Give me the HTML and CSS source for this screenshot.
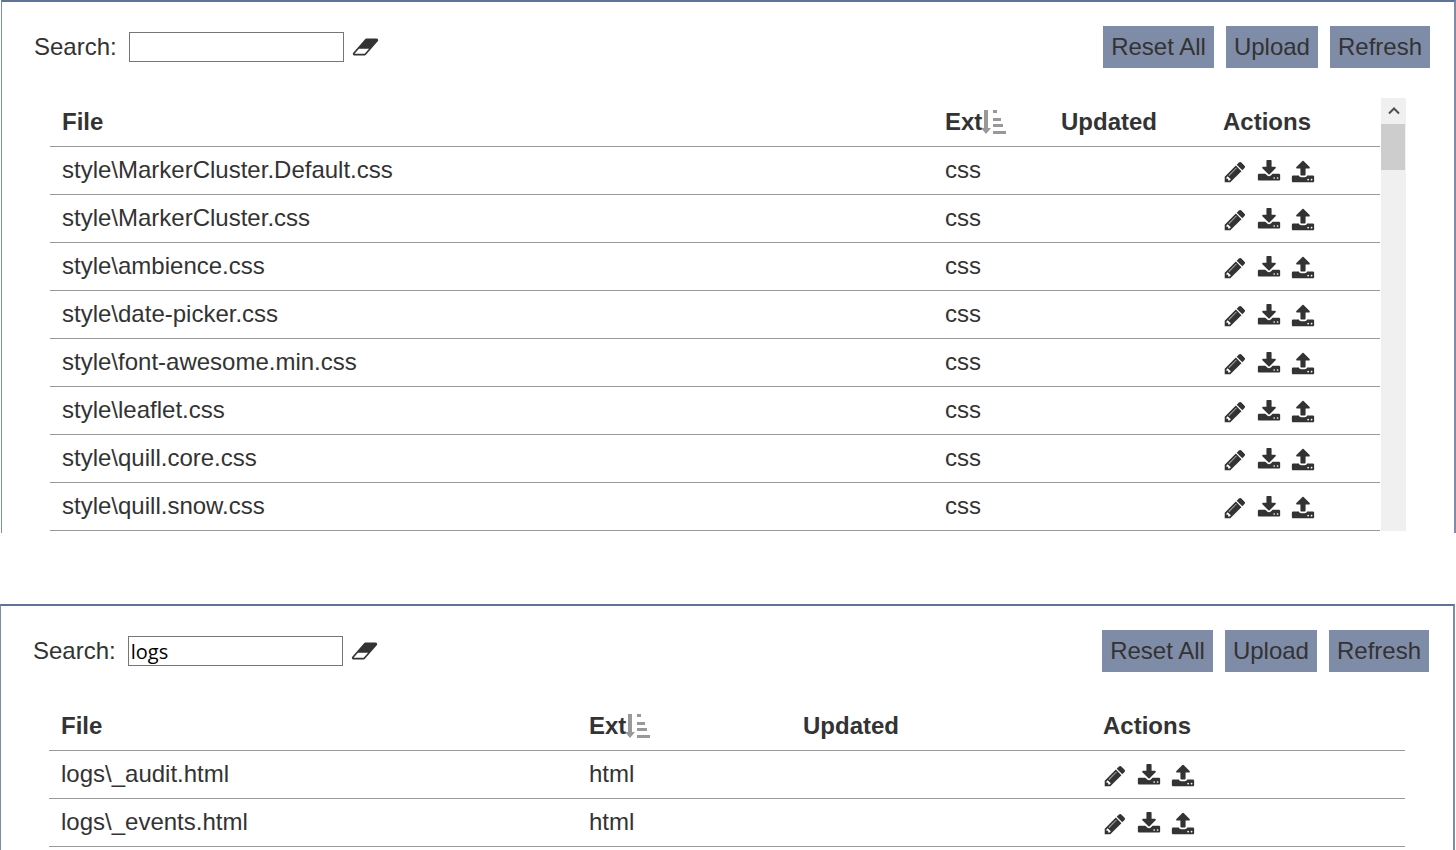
FILE: index.html
```html
<!DOCTYPE html>
<html lang="en">
<head>
  <meta charset="UTF-8" />
  <meta name="viewport" content="width=device-width, initial-scale=1.0" />
  <title>Files</title>
  <link rel="stylesheet" href="styles.css">
</head>
<body>
  <svg class="icon-defs" width="0" height="0">
    <symbol id="i-eraser" viewBox="0 0 2048 1792">
      <path d="M960 1408l336-384h-768l-336 384h768zm1013-1077q15 34 9.5 71.5t-30.5 65.5l-896 1024q-38 44-96 44h-768q-38 0-69.5-20.5t-47.5-54.5q-15-34-9.5-71.5t30.5-65.5l896-1024q38-44 96-44h768q38 0 70 20.5t47 54.5z"/>
    </symbol>
    <symbol id="i-pencil" viewBox="0 0 1792 1792">
      <path d="M491 1536l91-91-235-235-91 91v107h128v128h107zm523-928q0-22-22-22-10 0-17 7l-542 542q-7 7-7 17 0 22 22 22 10 0 17-7l542-542q7-7 7-17zm-54-192l416 416-832 832h-416v-416zm683 96q0 53-37 90l-166 166-416-416 166-165q36-38 90-38 53 0 91 38l235 234q37 39 37 91z"/>
    </symbol>
    <symbol id="i-download" viewBox="0 0 1792 1792">
      <path d="M1344 1344q0-26-19-45t-45-19-45 19-19 45 19 45 45 19 45-19 19-45zm256 0q0-26-19-45t-45-19-45 19-19 45 19 45 45 19 45-19 19-45zm128-224v320q0 40-28 68t-68 28h-1472q-40 0-68-28t-28-68v-320q0-40 28-68t68-28h465l135 136q58 56 136 56t136-56l136-136h464q40 0 68 28t28 68zm-325-569q17 41-14 70l-448 448q-18 19-45 19t-45-19l-448-448q-31-29-14-70 17-39 59-39h256v-448q0-26 19-45t45-19h256q26 0 45 19t19 45v448h256q42 0 59 39z"/>
    </symbol>
    <symbol id="i-upload" viewBox="0 0 1792 1792">
      <path d="M1344 1472q0-26-19-45t-45-19-45 19-19 45 19 45 45 19 45-19 19-45zm256 0q0-26-19-45t-45-19-45 19-19 45 19 45 45 19 45-19 19-45zm128-224v320q0 40-28 68t-68 28h-1472q-40 0-68-28t-28-68v-320q0-40 28-68t68-28h427q21 56 70.5 92t110.5 36h256q61 0 110.5-36t70.5-92h427q40 0 68 28t28 68zm-325-648q-17 40-59 40h-256v448q0 26-19 45t-45 19h-256q-26 0-45-19t-19-45v-448h-256q-42 0-59-40-17-39 14-69l448-448q18-19 45-19t45 19l448 448q31 30 14 69z"/>
    </symbol>
    <symbol id="i-sort" viewBox="0 0 24 24">
      <path d="M2 0h4v18h3l-5 6-5-6h3zM11 0h4v3h-4zM11 8h8v3h-8zM11 14h10v3h-10zM11 21h13v3h-13z"/>
    </symbol>
  </svg>

  <div class="panel panel-first">
    <div class="toolbar">
      <label class="search">Search:
        <input type="text" class="search-input" />
      </label>
      <svg class="eraser"><use href="#i-eraser"/></svg>
      <div class="buttons">
        <button class="button">Reset All</button>
        <button class="button">Upload</button>
        <button class="button">Refresh</button>
      </div>
    </div>
    <div class="table-area">
      <table class="files">
        <colgroup>
          <col class="col-a"><col class="col-b"><col class="col-c"><col class="col-d">
        </colgroup>
        <thead>
          <tr>
            <th>File</th>
            <th>Ext<svg class="sort"><use href="#i-sort"/></svg></th>
            <th>Updated</th>
            <th>Actions</th>
          </tr>
        </thead>
        <tbody>
          <tr>
            <td>style\MarkerCluster.Default.css</td>
            <td>css</td>
            <td></td>
            <td class="actions"><svg><use href="#i-pencil"/></svg><svg><use href="#i-download"/></svg><svg><use href="#i-upload"/></svg></td>
          </tr>
          <tr>
            <td>style\MarkerCluster.css</td>
            <td>css</td>
            <td></td>
            <td class="actions"><svg><use href="#i-pencil"/></svg><svg><use href="#i-download"/></svg><svg><use href="#i-upload"/></svg></td>
          </tr>
          <tr>
            <td>style\ambience.css</td>
            <td>css</td>
            <td></td>
            <td class="actions"><svg><use href="#i-pencil"/></svg><svg><use href="#i-download"/></svg><svg><use href="#i-upload"/></svg></td>
          </tr>
          <tr>
            <td>style\date-picker.css</td>
            <td>css</td>
            <td></td>
            <td class="actions"><svg><use href="#i-pencil"/></svg><svg><use href="#i-download"/></svg><svg><use href="#i-upload"/></svg></td>
          </tr>
          <tr>
            <td>style\font-awesome.min.css</td>
            <td>css</td>
            <td></td>
            <td class="actions"><svg><use href="#i-pencil"/></svg><svg><use href="#i-download"/></svg><svg><use href="#i-upload"/></svg></td>
          </tr>
          <tr>
            <td>style\leaflet.css</td>
            <td>css</td>
            <td></td>
            <td class="actions"><svg><use href="#i-pencil"/></svg><svg><use href="#i-download"/></svg><svg><use href="#i-upload"/></svg></td>
          </tr>
          <tr>
            <td>style\quill.core.css</td>
            <td>css</td>
            <td></td>
            <td class="actions"><svg><use href="#i-pencil"/></svg><svg><use href="#i-download"/></svg><svg><use href="#i-upload"/></svg></td>
          </tr>
          <tr>
            <td>style\quill.snow.css</td>
            <td>css</td>
            <td></td>
            <td class="actions"><svg><use href="#i-pencil"/></svg><svg><use href="#i-download"/></svg><svg><use href="#i-upload"/></svg></td>
          </tr>
        </tbody>
      </table>
      <div class="scrollbar">
        <div class="scroll-up">
          <svg viewBox="0 0 12 8"><path d="M1 6.5l5-5 5 5" /></svg>
        </div>
        <div class="scroll-thumb"></div>
      </div>
    </div>
  </div>

  <div class="panel panel-second">
    <div class="toolbar">
      <label class="search">Search:
        <input type="text" class="search-input" value="logs" />
      </label>
      <svg class="eraser"><use href="#i-eraser"/></svg>
      <div class="buttons">
        <button class="button">Reset All</button>
        <button class="button">Upload</button>
        <button class="button">Refresh</button>
      </div>
    </div>
    <div class="table-area">
      <table class="files">
        <colgroup>
          <col class="col-a"><col class="col-b"><col class="col-c"><col class="col-d">
        </colgroup>
        <thead>
          <tr>
            <th>File</th>
            <th>Ext<svg class="sort"><use href="#i-sort"/></svg></th>
            <th>Updated</th>
            <th>Actions</th>
          </tr>
        </thead>
        <tbody>
          <tr>
            <td>logs\_audit.html</td>
            <td>html</td>
            <td></td>
            <td class="actions"><svg><use href="#i-pencil"/></svg><svg><use href="#i-download"/></svg><svg><use href="#i-upload"/></svg></td>
          </tr>
          <tr>
            <td>logs\_events.html</td>
            <td>html</td>
            <td></td>
            <td class="actions"><svg><use href="#i-pencil"/></svg><svg><use href="#i-download"/></svg><svg><use href="#i-upload"/></svg></td>
          </tr>
        </tbody>
      </table>
    </div>
  </div>
</body>
</html>
```

FILE: styles.css
```css
html {
  overflow: hidden;
}
body {
  font-family: "Liberation Sans", Arial, sans-serif;
  font-size: 24px;
  color: #333333;
  margin: 0;
  padding: 0;
  background-color: #ffffff;
}
.icon-defs {
  position: absolute;
}
.panel {
  box-sizing: border-box;
  width: 1455px;
  overflow: hidden;
  border-top: 2px solid #5f7298;
  border-left: 1px solid #7f8ca8;
  border-right: 2px solid #7f8ca8;
}
.panel-first {
  height: 533px;
  margin-left: 1px;
}
.panel-second {
  height: 246px;
  margin-top: 71px;
}
.toolbar {
  display: flex;
  align-items: center;
  height: 42px;
  padding: 24px 24px 30px 32px;
}
.search {
  display: flex;
  align-items: center;
  gap: 12px;
}
.search-input {
  box-sizing: border-box;
  width: 215px;
  height: 30px;
  padding: 2px;
  border: 1px solid #767676;
  border-radius: 0;
  font-family: "Open Sans", sans-serif;
  font-size: 20px;
  color: #000000;
}
.eraser {
  width: 27px;
  height: 24px;
  margin-left: 8px;
  fill: #333333;
}
.buttons {
  display: flex;
  gap: 12px;
  margin-left: auto;
}
.button {
  height: 42px;
  padding: 0 8px;
  background-color: #7f8ca8;
  color: #333333;
  border: none;
  border-radius: 0;
  font-family: inherit;
  font-size: 24px;
}
.table-area {
  display: flex;
  padding: 0 48px;
}
.files {
  flex: 1;
  table-layout: fixed;
  border-collapse: collapse;
}
.files th,
.files td {
  box-sizing: border-box;
  height: 48px;
  padding: 0 12px;
  border-bottom: 1px solid #999999;
  text-align: left;
  white-space: nowrap;
}
.sort {
  width: 24px;
  height: 24px;
  vertical-align: -4px;
  fill: #999999;
}
.actions svg {
  width: 24px;
  height: 24px;
  margin-right: 10px;
  vertical-align: middle;
  fill: #333333;
}
.panel-first .col-a { width: 883px; }
.panel-first .col-b { width: 116px; }
.panel-first .col-c { width: 162px; }
.panel-second .col-a { width: 528px; }
.panel-second .col-b { width: 214px; }
.panel-second .col-c { width: 300px; }
.scrollbar {
  width: 25px;
  margin-left: 1px;
  background-color: #f0f0f0;
}
.scroll-up {
  display: flex;
  align-items: center;
  justify-content: center;
  height: 26px;
}
.scroll-up svg {
  width: 12px;
  height: 8px;
  fill: none;
  stroke: #505050;
  stroke-width: 2;
}
.scroll-thumb {
  width: 24px;
  height: 46px;
  background-color: #cdcdcd;
}
```
